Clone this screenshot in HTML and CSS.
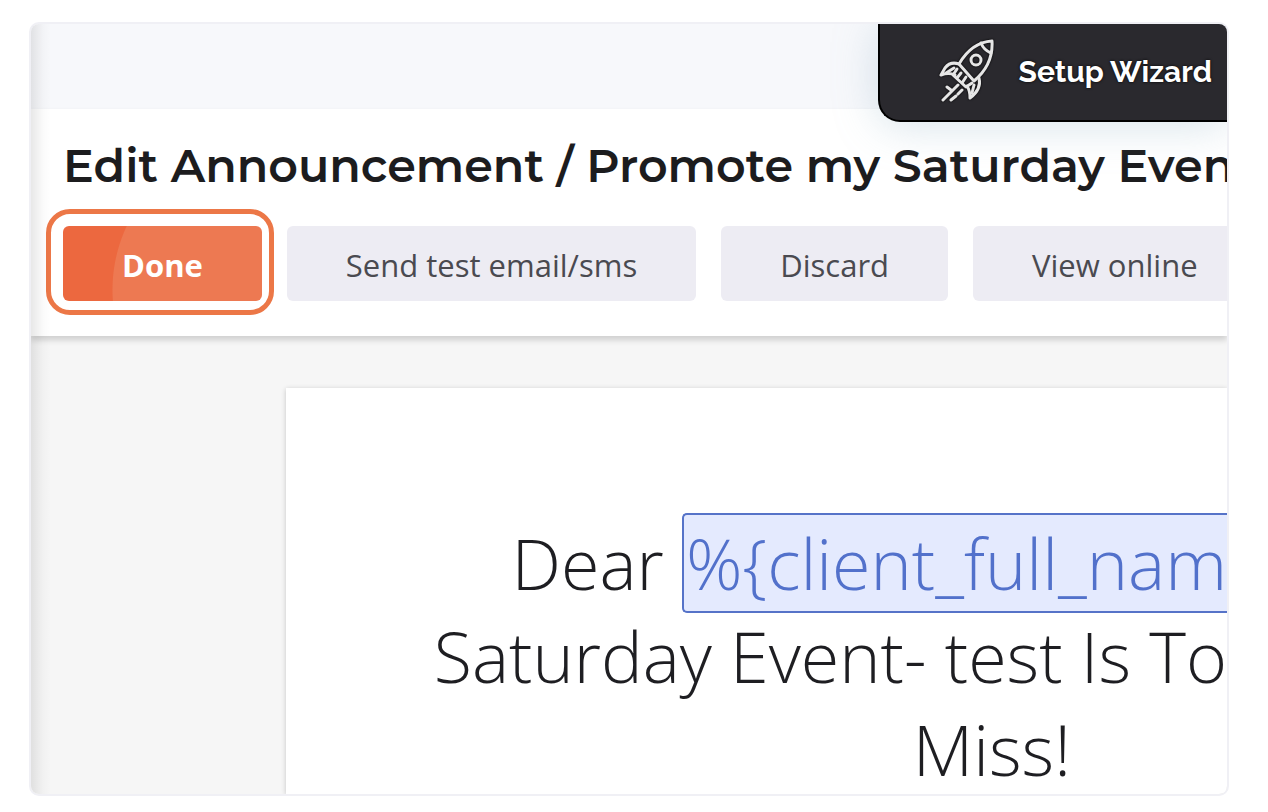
FILE: index.html
```html
<!DOCTYPE html>
<html lang="en">
<head>
    <meta charset="UTF-8">
    <meta name="viewport" content="width=device-width, initial-scale=1.0">
    <title>Edit Announcement</title>
    <link rel="stylesheet" href="styles.css">
</head>
<body>
    <div class="window">
        <div class="topbar"></div>

        <button class="wizard" type="button">
            <svg class="rocket" viewBox="0 0 56 64" aria-hidden="true">
                <path d="M20 25C27 13 37 3 53 2C54 18 47 32 35 42Z"/>
                <path d="M42 4C44 9 47 12 52 14"/>
                <circle cx="37" cy="21" r="5"/>
                <path d="M20 25C14 23 9 25 6 29L2 36C7 34 12 34 16 36"/>
                <path d="M7 34L15 29"/>
                <path d="M40 39C42 47 39 53 31 59C31 54 30 50 28 47"/>
                <path d="M33 54L35 46"/>
                <path d="M18 30L14 36L27 48L33 44M22 34L18 39M27 38L23 44"/>
                <path d="M19 46L4 61M8 48L12 51M17 57L12 61M23 51L19 55"/>
            </svg>
            <span>Setup Wizard</span>
        </button>

        <!-- Page title and actions -->
        <header class="header">
            <h1>Edit Announcement / Promote my Saturday Even</h1>
            <div class="actions">
                <button class="done" type="button">Done</button>
                <button type="button">Send test email/sms</button>
                <button type="button">Discard</button>
                <button type="button">View online</button>
            </div>
        </header>

        <!-- Email preview -->
        <main class="editor">
            <div class="paper">
                <p>Dear <span class="tag">%{client_full_nam</span></p>
                <p>Saturday Event- test Is To</p>
                <p class="last">Miss!</p>
            </div>
        </main>
    </div>
</body>
</html>
```

FILE: styles.css
```css
* {
    box-sizing: border-box;
}

body {
    font-family: "Open Sans", sans-serif;
    height: 100vh;
    margin: 0;
    padding: 22px 39px 16px 29px;
    background: #fff;
}

.window {
    position: relative;
    display: flex;
    flex-direction: column;
    height: 100%;
    border: 2px solid #f0f0f5;
    border-radius: 10px;
    overflow: hidden;
}

/* soft shade along the left edge */
.window::after {
    content: "";
    position: absolute;
    z-index: 3;
    top: 0;
    bottom: 0;
    left: 0;
    width: 20px;
    background: linear-gradient(to right, rgba(0, 0, 0, 0.09), rgba(0, 0, 0, 0.02) 60%, transparent);
    pointer-events: none;
}

.topbar {
    position: relative;
    z-index: 1;
    flex: none;
    height: 85px;
    background: #f7f8fb;
}

.wizard {
    position: absolute;
    z-index: 2;
    top: 0;
    right: 0;
    display: flex;
    align-items: center;
    gap: 24px;
    height: 98px;
    padding: 0 15px 2px 59px;
    border: solid #000;
    border-width: 0 0 2px 2px;
    border-bottom-left-radius: 22px;
    background: #2a292e;
    box-shadow: 0 4px 44px rgba(140, 175, 195, 0.35);
    color: #fff;
    font-family: Raleway, Lato, sans-serif;
    font-size: 30px;
    font-weight: 700;
    text-shadow: 0 0 3px #000;
    white-space: nowrap;
}

.rocket {
    width: 56px;
    height: 64px;
    fill: none;
    stroke: #e6e6e6;
    stroke-width: 3;
    stroke-linecap: round;
    stroke-linejoin: round;
    filter: drop-shadow(0 0 1px #000);
}

.header {
    position: relative;
    z-index: 1;
    flex: none;
    padding: 29px 0 35px 32px;
    background: #fff;
    box-shadow: 0 4px 6px rgba(0, 0, 0, 0.16);
}

.header h1 {
    margin: 0;
    color: #1c1c1e;
    font-family: Montserrat, Inter, sans-serif;
    font-size: 46px;
    font-weight: 600;
    line-height: 56px;
    white-space: nowrap;
}

.actions {
    display: flex;
    gap: 25px;
    margin-top: 32px;
}

.actions button {
    position: relative;
    flex: none;
    height: 75px;
    padding: 2px 59px 0;
    border: none;
    border-radius: 6px;
    background: #edecf3;
    color: #4a4a50;
    font-family: "Open Sans", sans-serif;
    font-size: 31px;
    white-space: nowrap;
}

.actions .done {
    background: radial-gradient(circle at 200px 64px, #ed7952 150px, #ec683f 151px);
    color: #fff;
    font-weight: 700;
}

.done::after {
    content: "";
    position: absolute;
    inset: -17px -12px -14px -17px;
    border: 5px solid #ec7747;
    border-radius: 24px;
}

.editor {
    flex: 1;
    min-height: 0;
    padding: 52px 0 0 255px;
    background: #f6f6f6;
}

.paper {
    height: 100%;
    padding-top: 129px;
    background: #fff;
    box-shadow: 0 1px 5px rgba(0, 0, 0, 0.2);
}

.paper p {
    margin: 0;
    color: #1e1e22;
    font-size: 70px;
    font-weight: 300;
    line-height: 93px;
    text-align: right;
    white-space: nowrap;
}

.paper .last {
    padding-right: 156px;
}

.tag {
    border: 2px solid #5673c8;
    border-right: none;
    border-radius: 5px 0 0 5px;
    padding-left: 2px;
    background: #e4eafe;
    color: #5271cb;
}
```
